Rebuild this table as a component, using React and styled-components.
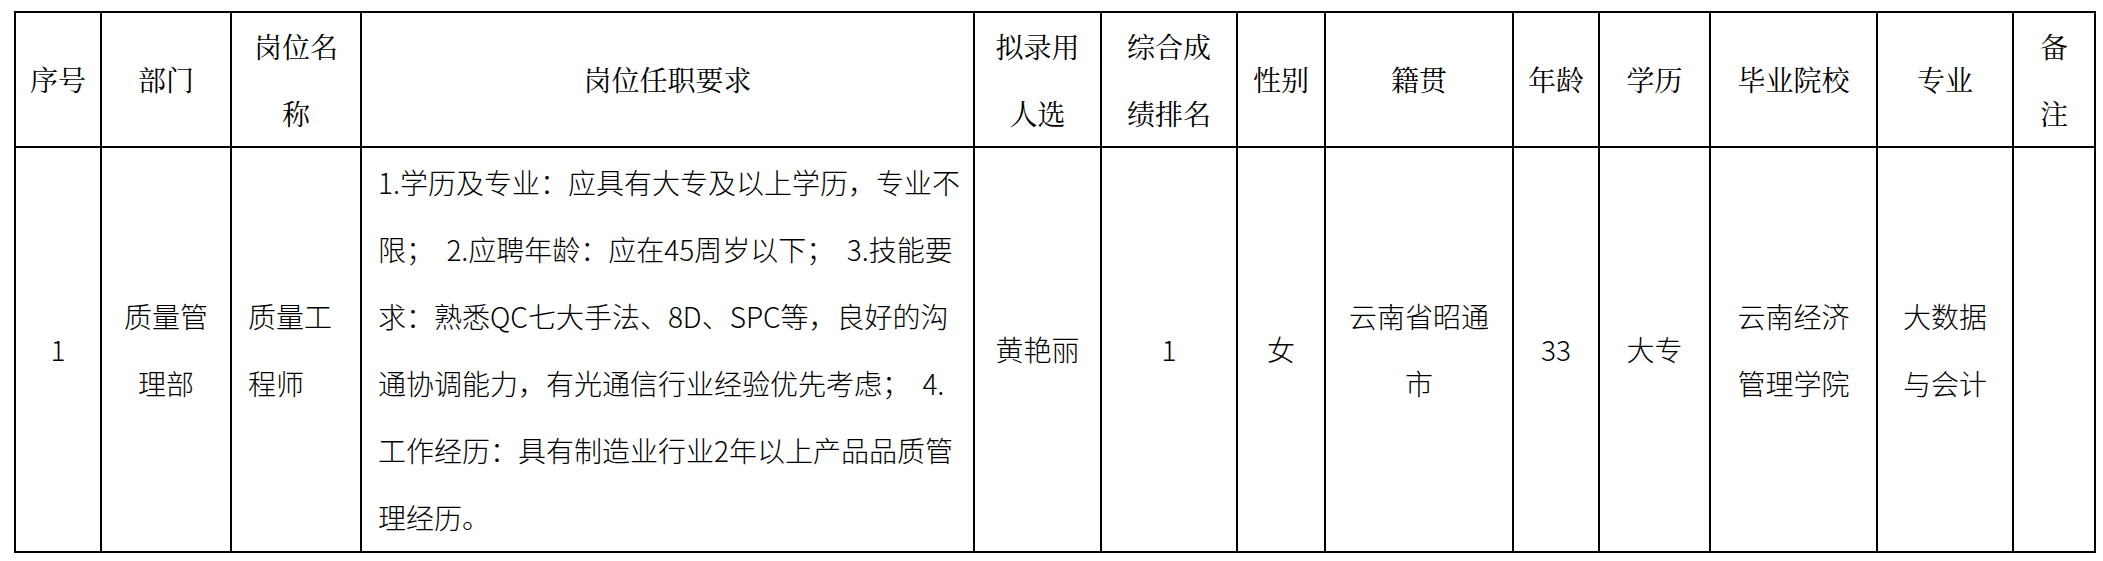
import React from "react";
import styled, { createGlobalStyle } from "styled-components";

const GlobalStyle = createGlobalStyle`
  html, body {
    margin: 0;
    padding: 0;
    background: #ffffff;
  }
`;

const Page = styled.div`
  padding: 11px 0 0 14px;
  background: #ffffff;
`;

const Table = styled.table`
  width: 2082px;
  table-layout: fixed;
  border-collapse: separate;
  border-spacing: 0;
  border-top: 2px solid #000;
  border-left: 2px solid #000;
  color: #000;
`;

const HeadCell = styled.th`
  box-sizing: border-box;
  width: ${({ $w }) => $w}px;
  height: 135px;
  padding: 0;
  border-right: 2px solid #000;
  border-bottom: 2px solid #000;
  font-family: "Noto Serif CJK SC", "Noto Sans CJK SC", serif;
  font-size: 28px;
  font-weight: 400;
  line-height: 66.5px;
  text-align: center;
  vertical-align: middle;
`;

const BodyCell = styled.td`
  box-sizing: border-box;
  height: 405px;
  padding: 0 16px;
  border-right: 2px solid #000;
  border-bottom: 2px solid #000;
  font-family: "Noto Sans CJK SC", sans-serif;
  font-size: 28px;
  font-weight: 300;
  line-height: 67px;
  text-align: ${({ $align }) => $align || "center"};
  vertical-align: middle;
`;

const Line = styled.span`
  display: block;
  white-space: pre;
`;

const columns = [
  { w: 86, head: ["序号"], body: ["1"] },
  { w: 130, head: ["部门"], body: ["质量管", "理部"] },
  { w: 130, head: ["岗位名", "称"], body: ["质量工", "程师"], align: "left" },
  {
    w: 613,
    head: ["岗位任职要求"],
    body: [
      "1.学历及专业：应具有大专及以上学历，专业不",
      "限；  2.应聘年龄：应在45周岁以下；  3.技能要",
      "求：熟悉QC七大手法、8D、SPC等，良好的沟",
      "通协调能力，有光通信行业经验优先考虑；  4.",
      "工作经历：具有制造业行业2年以上产品品质管",
      "理经历。",
    ],
    align: "left",
  },
  { w: 127, head: ["拟录用", "人选"], body: ["黄艳丽"] },
  { w: 136, head: ["综合成", "绩排名"], body: ["1"] },
  { w: 88, head: ["性别"], body: ["女"] },
  { w: 188, head: ["籍贯"], body: ["云南省昭通", "市"] },
  { w: 86, head: ["年龄"], body: ["33"] },
  { w: 111, head: ["学历"], body: ["大专"] },
  { w: 167, head: ["毕业院校"], body: ["云南经济", "管理学院"] },
  { w: 136, head: ["专业"], body: ["大数据", "与会计"] },
  { w: 82, head: ["备", "注"], body: [] },
];

const App = () => {
  return (
    <Page>
      <GlobalStyle />
      <Table>
        <thead>
          <tr>
            {columns.map((col, i) => (
              <HeadCell key={i} $w={col.w}>
                {col.head.map((t, j) => (
                  <Line key={j}>{t}</Line>
                ))}
              </HeadCell>
            ))}
          </tr>
        </thead>
        <tbody>
          <tr>
            {columns.map((col, i) => (
              <BodyCell key={i} $align={col.align}>
                {col.body.map((t, j) => (
                  <Line key={j}>{t}</Line>
                ))}
              </BodyCell>
            ))}
          </tr>
        </tbody>
      </Table>
    </Page>
  );
};

export default App;
